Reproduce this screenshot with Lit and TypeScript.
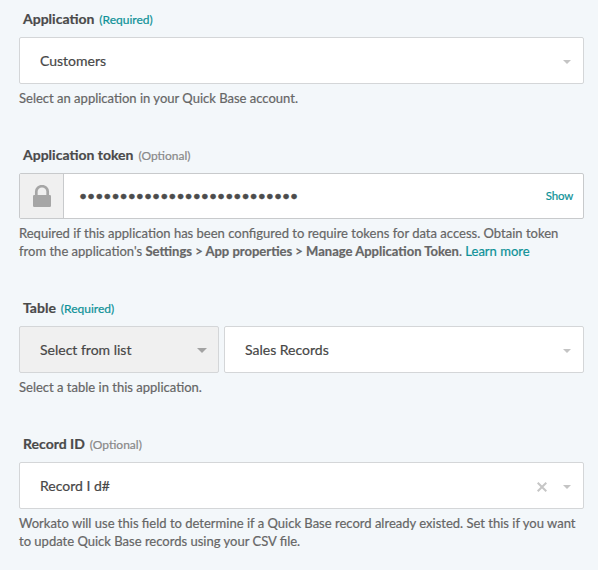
import { LitElement, html, css } from "lit";
import { customElement, property } from "lit/decorators.js";

@customElement("form-field")
class FormField extends LitElement {
  @property() label = "";
  @property() note = "";
  @property({ type: Boolean }) required = false;
  static styles = css`
    :host { display: block; height: 136px; box-sizing: border-box; }
    :host([tall]) { height: 153px; }
    .head { display: flex; align-items: baseline; height: 18px; line-height: 18px; padding-left: 4px; margin-bottom: 9px; gap: 5px; white-space: nowrap; }
    .label { font-size: 14px; font-weight: 700; color: #4a4a4a; }
    .note { font-size: 12px; color: #888; }
    .note.required { color: #0d9197; }
    .controls { display: flex; gap: 5px; height: 47px; }
    :host([tall]) .controls { height: 46px; }
    .hint { margin-top: 5px; font-size: 13.02px; line-height: 18px; color: #666; white-space: nowrap; }
  `;
  render() {
    return html`<div class="head"><span class="label">${this.label}</span><span class="note ${this.required ? "required" : ""}">(${this.note})</span></div>
      <div class="controls"><slot name="control"></slot></div>
      <div class="hint"><slot></slot></div>`;
  }
}

@customElement("select-box")
class SelectBox extends LitElement {
  @property() value = "";
  @property({ type: Boolean }) clearable = false;
  static styles = css`
    :host { display: flex; flex: 1; box-sizing: border-box; align-items: center; border: 1px solid #d4d6d8; border-radius: 2px; background: #fff; padding: 0 12px 0 20px; font-size: 14px; color: #474747; }
    :host([muted]) { flex: 0 0 200px; background: #f0f0f0; padding-right: 11px; }
    .value { flex: 1; white-space: nowrap; }
    .clear { margin-right: 16px; margin-top: 3px; }
    .arrow { margin-top: 3px; fill: #c4c4c4; }
    :host([muted]) .arrow { margin-top: 2px; fill: #a3a3a3; }
  `;
  render() {
    const muted = this.hasAttribute("muted");
    return html`<span class="value">${this.value}</span>
      ${this.clearable ? html`<svg class="clear" width="10" height="10" viewBox="0 0 10 10"><path d="M.7.7l8.6 8.6M9.3.7L.7 9.3" fill="none" stroke="#c6c6c6" stroke-width="2"/></svg>` : ""}
      <svg class="arrow" width=${muted ? 10 : 8} height=${muted ? 5 : 4} viewBox="0 0 8 4" preserveAspectRatio="none"><path d="M0 0h8L4 4z"/></svg>`;
  }
}

@customElement("app-root")
class AppRoot extends LitElement {
  static styles = css`
    :host { display: block; box-sizing: border-box; width: 598px; height: 570px; padding: 10px 14px 0 19px; overflow: hidden; background: #f3f7fa; font-family: Lato, sans-serif; -webkit-text-stroke: 0.2px; }
    b { color: #666; }
    .link { color: #0d9197; }
    .token { display: flex; flex: 1; box-sizing: border-box; align-items: center; border: 1px solid #c8cacc; border-radius: 2px; background: #fff; }
    .lock { display: flex; align-items: center; justify-content: center; box-sizing: border-box; width: 44px; height: 100%; border-right: 1px solid #c8cacc; background: #f0f0f0; }
    .dots { flex: 1; margin: 0 0 2px 15px; font-size: 14px; color: #4c4c4c; white-space: nowrap; -webkit-text-stroke: 0.5px; }
    .show { font-size: 11.5px; letter-spacing: -0.2px; margin: 0 10px 1px 0; }
  `;
  render() {
    return html`
      <form-field label="Application" note="Required" required>
        <select-box slot="control" value="Customers"></select-box>
        Select an application in your Quick Base account.
      </form-field>
      <form-field tall label="Application token" note="Optional">
        <div slot="control" class="token">
          <span class="lock"><svg width="18" height="22" viewBox="0 0 18 22"><path d="M3.3 11V6.5a5.7 5.3 0 0 1 11.4 0V11" fill="none" stroke="#a6a6a6" stroke-width="2.7"/><rect y="10" width="18" height="12" rx="1.2" fill="#a6a6a6"/></svg></span>
          <span class="dots">${"•".repeat(27)}</span>
          <span class="show link">Show</span>
        </div>
        Required if this application has been configured to require tokens for data access. Obtain token<br>from the application's <b>Settings &gt; App properties &gt; Manage Application Token</b>. <span class="link">Learn more</span>
      </form-field>
      <form-field label="Table" note="Required" required>
        <select-box slot="control" muted value="Select from list"></select-box>
        <select-box slot="control" value="Sales Records"></select-box>
        Select a table in this application.
      </form-field>
      <form-field label="Record ID" note="Optional">
        <select-box slot="control" clearable value="Record I d#"></select-box>
        Workato will use this field to determine if a Quick Base record already existed. Set this if you want<br>to update Quick Base records using your CSV file.
      </form-field>`;
  }
}
